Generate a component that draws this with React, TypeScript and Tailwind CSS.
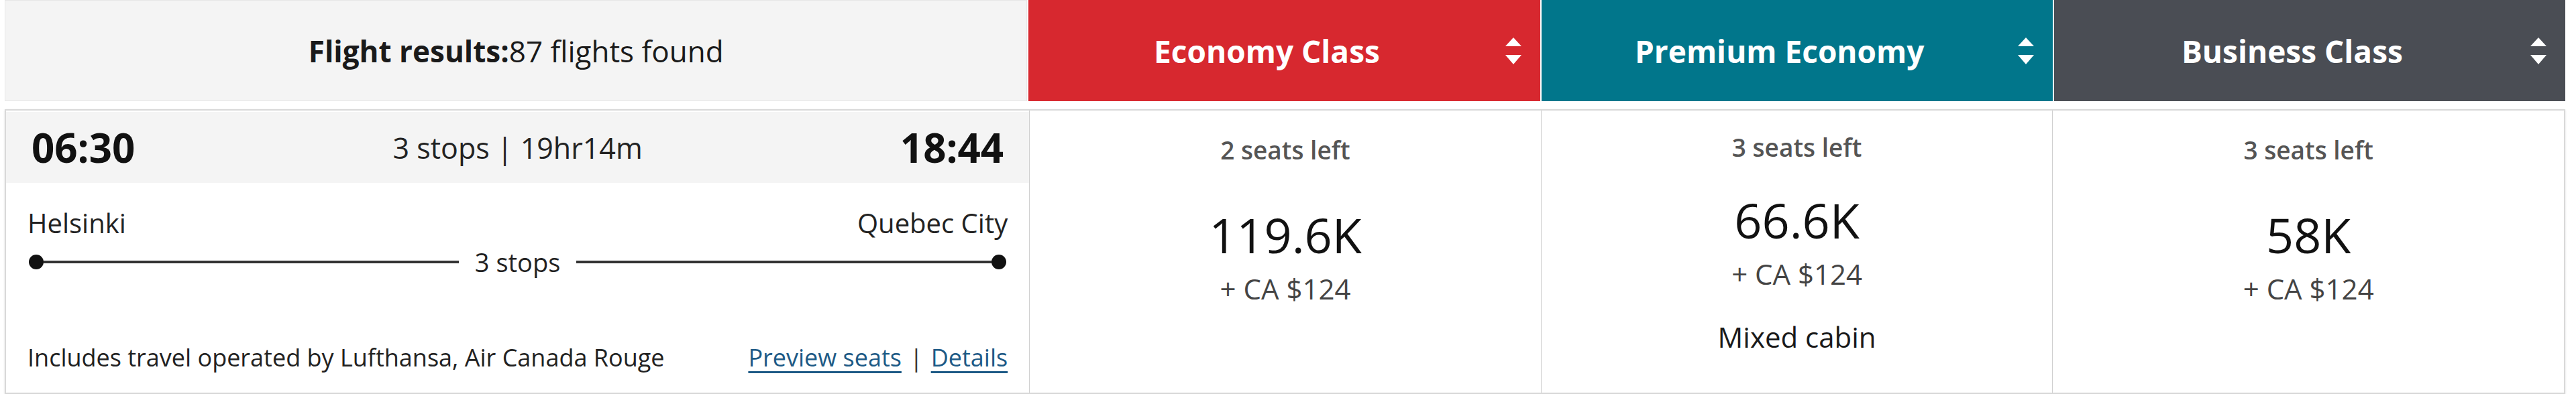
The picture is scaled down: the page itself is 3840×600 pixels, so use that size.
import React from "react";

type Fare = {
  seats: string;
  price: string;
  cash: string;
  mixed?: boolean;
};

const cabins = [
  { name: "Economy Class", bg: "bg-[#d7282f]" },
  { name: "Premium Economy", bg: "bg-[#01768b]" },
  { name: "Business Class", bg: "bg-[#4a4d54]" },
];

const fares: Fare[] = [
  { seats: "2 seats left", price: "119.6K", cash: "+ CA $124" },
  { seats: "3 seats left", price: "66.6K", cash: "+ CA $124", mixed: true },
  { seats: "3 seats left", price: "58K", cash: "+ CA $124" },
];

function SortIcon() {
  return (
    <svg width="24" height="40" viewBox="0 0 24 40" fill="white" aria-hidden>
      <path d="M12 0 L24 13 L0 13 Z" />
      <path d="M0 26 L24 26 L12 40 Z" />
    </svg>
  );
}

function FareCell({ fare }: { fare: Fare }) {
  return (
    <div
      className={`flex flex-col items-center border-l border-[#cfcfcf] leading-none ${
        fare.mixed ? "pt-[36px]" : "pt-[40px]"
      }`}
    >
      <div className="text-[37px] font-semibold text-[#555]">{fare.seats}</div>
      <div
        className={`text-[72px] text-[#111] ${fare.mixed ? "mt-[54px]" : "mt-[72px]"}`}
      >
        {fare.price}
      </div>
      <div className="mt-[24px] text-[42px] text-[#444]">{fare.cash}</div>
      {fare.mixed && (
        <div className="mt-[52px] text-[42px] text-[#1a1a1a]">Mixed cabin</div>
      )}
    </div>
  );
}

export default function App() {
  return (
    <div className="ml-[7px] mr-[16px] bg-white font-['Open_Sans',sans-serif]">
      {/* header */}
      <div className="grid h-[151px] grid-cols-[2fr_1fr_1fr_1fr] gap-[2px]">
        <div className="flex items-center justify-center border border-[#e6e6e6] bg-[#f4f4f4] text-[44px] leading-none text-[#1a1a1a]">
          <span className="font-bold">Flight results:</span>
          <span>87 flights found</span>
        </div>
        {cabins.map((c) => (
          <div key={c.name} className={`flex items-center ${c.bg}`}>
            <div className="flex-1 text-center text-[46px] font-bold leading-none text-white">
              {c.name}
            </div>
            <div className="mr-[28px] flex">
              <SortIcon />
            </div>
          </div>
        ))}
      </div>

      {/* flight row */}
      <div className="mt-3 grid h-[425px] grid-cols-[2fr_1fr_1fr_1fr] border-2 border-[#d9d9d9] shadow-sm">
        <div className="flex flex-col pt-[2px]">
          <div className="flex h-[106px] items-center justify-between bg-[#f4f4f4] px-[38px] leading-none text-[#111]">
            <span className="text-[60px] font-bold">06:30</span>
            <span className="text-[43px] text-[#222]">3 stops | 19hr14m</span>
            <span className="text-[60px] font-bold">18:44</span>
          </div>

          <div className="flex flex-1 flex-col px-8 pb-[34px] leading-none text-[#222]">
            <div className="mt-[40px] flex justify-between text-[40px]">
              <span>Helsinki</span>
              <span>Quebec City</span>
            </div>

            <div className="mt-[18px] flex h-[40px] items-center px-[2px]">
              <span className="h-[22px] w-[22px] rounded-full bg-[#111]" />
              <span className="h-[4px] flex-1 bg-[#333]" />
              <span className="px-6 text-[38px]">3 stops</span>
              <span className="h-[4px] flex-1 bg-[#333]" />
              <span className="h-[22px] w-[22px] rounded-full bg-[#111]" />
            </div>

            <div className="mt-auto flex items-end justify-between text-[36px]">
              <span>Includes travel operated by Lufthansa, Air Canada Rouge</span>
              <span className="flex gap-3">
                <a className="text-[#1d5a86] underline decoration-[3px] underline-offset-[7px]">
                  Preview seats
                </a>
                <span className="text-[#333]">|</span>
                <a className="text-[#1d5a86] underline decoration-[3px] underline-offset-[7px]">
                  Details
                </a>
              </span>
            </div>
          </div>
        </div>

        {fares.map((f, i) => (
          <FareCell key={i} fare={f} />
        ))}
      </div>
    </div>
  );
}
